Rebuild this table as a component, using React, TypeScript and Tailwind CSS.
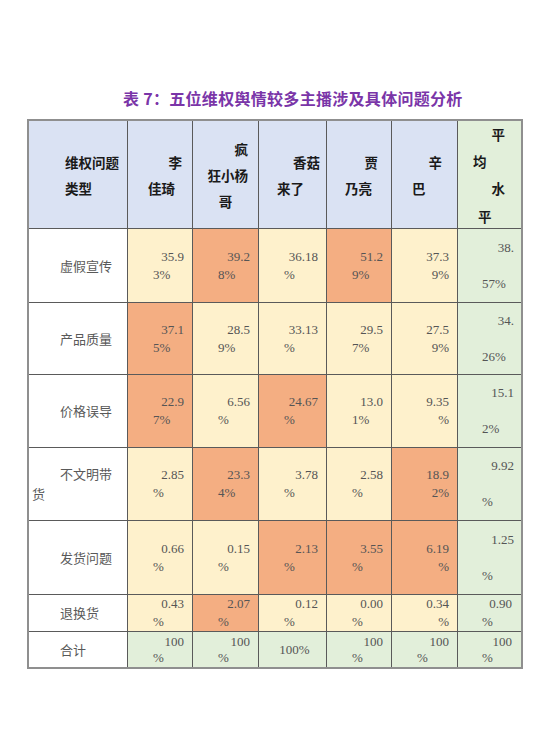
import React from 'react';

type Cell = {
  a: string;
  b?: string;
  kind: 'split' | 'right' | 'single' | 'avg' | 'avgTight';
  bg: 'y' | 'o' | 'g';
};

const bgClass = {
  y: 'bg-[#fef1cc]',
  o: 'bg-[#f4ae82]',
  g: 'bg-[#e2efda]',
};

const rows: { label: React.ReactNode; cells: Cell[]; tight?: boolean }[] = [
  {
    label: '虚假宣传',
    cells: [
      { a: '35.9', b: '3%', kind: 'split', bg: 'y' },
      { a: '39.2', b: '8%', kind: 'split', bg: 'o' },
      { a: '36.18', b: '%', kind: 'split', bg: 'y' },
      { a: '51.2', b: '9%', kind: 'split', bg: 'o' },
      { a: '37.3', b: '9%', kind: 'right', bg: 'y' },
      { a: '38.', b: '57%', kind: 'avg', bg: 'g' },
    ],
  },
  {
    label: '产品质量',
    cells: [
      { a: '37.1', b: '5%', kind: 'split', bg: 'o' },
      { a: '28.5', b: '9%', kind: 'split', bg: 'y' },
      { a: '33.13', b: '%', kind: 'split', bg: 'y' },
      { a: '29.5', b: '7%', kind: 'split', bg: 'y' },
      { a: '27.5', b: '9%', kind: 'right', bg: 'y' },
      { a: '34.', b: '26%', kind: 'avg', bg: 'g' },
    ],
  },
  {
    label: '价格误导',
    cells: [
      { a: '22.9', b: '7%', kind: 'split', bg: 'o' },
      { a: '6.56', b: '%', kind: 'split', bg: 'y' },
      { a: '24.67', b: '%', kind: 'split', bg: 'o' },
      { a: '13.0', b: '1%', kind: 'split', bg: 'y' },
      { a: '9.35', b: '%', kind: 'right', bg: 'y' },
      { a: '15.1', b: '2%', kind: 'avg', bg: 'g' },
    ],
  },
  {
    label: (
      <>
        不文明带
        <br />货
      </>
    ),
    cells: [
      { a: '2.85', b: '%', kind: 'split', bg: 'y' },
      { a: '23.3', b: '4%', kind: 'split', bg: 'o' },
      { a: '3.78', b: '%', kind: 'split', bg: 'y' },
      { a: '2.58', b: '%', kind: 'split', bg: 'y' },
      { a: '18.9', b: '2%', kind: 'right', bg: 'o' },
      { a: '9.92', b: '%', kind: 'avg', bg: 'g' },
    ],
  },
  {
    label: '发货问题',
    cells: [
      { a: '0.66', b: '%', kind: 'split', bg: 'y' },
      { a: '0.15', b: '%', kind: 'split', bg: 'y' },
      { a: '2.13', b: '%', kind: 'split', bg: 'o' },
      { a: '3.55', b: '%', kind: 'split', bg: 'o' },
      { a: '6.19', b: '%', kind: 'right', bg: 'o' },
      { a: '1.25', b: '%', kind: 'avg', bg: 'g' },
    ],
  },
  {
    label: '退换货',
    cells: [
      { a: '0.43', b: '%', kind: 'split', bg: 'y' },
      { a: '2.07', b: '%', kind: 'split', bg: 'o' },
      { a: '0.12', b: '%', kind: 'split', bg: 'y' },
      { a: '0.00', b: '%', kind: 'split', bg: 'y' },
      { a: '0.34', b: '%', kind: 'right', bg: 'y' },
      { a: '0.90', b: '%', kind: 'avgTight', bg: 'g' },
    ],
  },
  {
    label: '合计',
    tight: true,
    cells: [
      { a: '100', b: '%', kind: 'split', bg: 'g' },
      { a: '100', b: '%', kind: 'split', bg: 'g' },
      { a: '100%', kind: 'single', bg: 'g' },
      { a: '100', b: '%', kind: 'split', bg: 'g' },
      { a: '100', b: '%', kind: 'split', bg: 'g' },
      { a: '100', b: '%', kind: 'avgTight', bg: 'g' },
    ],
  },
];

const serif = "font-['Liberation_Serif','Noto_Sans_CJK_SC',serif]";
const cjk = "font-['Noto_Sans_CJK_SC',sans-serif]";

function NumCell({ c, tight }: { c: Cell; tight?: boolean }) {
  const lead = tight ? 'leading-[16px]' : 'leading-[18px]';
  const base = `${bgClass[c.bg]} ${serif} text-[13px] text-[#555555] flex flex-col justify-center`;
  if (c.kind === 'single') {
    return <div className={`${base} items-center pl-[4px] ${lead}`}>{c.a}</div>;
  }
  if (c.kind === 'avg') {
    return (
      <div className={`${base} leading-[36px]`}>
        <div className="text-right pr-[7px]">{c.a}</div>
        <div className="text-left pl-[24px]">{c.b}</div>
      </div>
    );
  }
  if (c.kind === 'avgTight') {
    return (
      <div className={`${base} ${lead}`}>
        <div className="text-right pr-[9px]">{c.a}</div>
        <div className="text-left pl-[24px]">{c.b}</div>
      </div>
    );
  }
  return (
    <div className={`${base} ${lead}`}>
      <div className="text-right pr-[8px]">{c.a}</div>
      <div className={c.kind === 'right' ? 'text-right pr-[8px]' : 'text-left pl-[25px]'}>{c.b}</div>
    </div>
  );
}

function Head({ lines, green }: { lines: { t: string; cls: string }[]; green?: boolean }) {
  return (
    <div
      className={`${green ? 'bg-[#e2efda]' : 'bg-[#dae2f3]'} ${cjk} font-bold text-[13.5px] text-[#1a1a1a] leading-[26px] flex flex-col justify-center`}
    >
      {lines.map((l, i) => (
        <div key={i} className={l.cls}>
          {l.t}
        </div>
      ))}
    </div>
  );
}

export default function App() {
  return (
    <div className="w-[540px] min-h-[746px] bg-white pt-[88px]">
      <div className={`pl-[123px] ${cjk} font-bold text-[16px] tracking-[0.3px] leading-[20px] text-[#7a35a8]`}>
        表 7：五位维权舆情较多主播涉及具体问题分析
      </div>
      <div className="ml-[27px] mt-[11px] w-[496px] border-2 border-[#8f8f8f]">
        <div className="grid grid-cols-[98px_64px_65px_67px_64px_65px_63px] grid-rows-[107px_73px_71px_72px_72px_73px_36px_35px] gap-px bg-[#5a5a5a]">
          <Head
            lines={[
              { t: '维权问题', cls: 'pl-[36px]' },
              { t: '类型', cls: 'pl-[36px]' },
            ]}
          />
          <Head
            lines={[
              { t: '李', cls: 'text-right pr-[10px]' },
              { t: '佳琦', cls: 'pl-[20px]' },
            ]}
          />
          <Head
            lines={[
              { t: '疯', cls: 'text-right pr-[10px]' },
              { t: '狂小杨', cls: 'text-right pr-[10px]' },
              { t: '哥', cls: 'text-center' },
            ]}
          />
          <Head
            lines={[
              { t: '香菇', cls: 'text-right pr-[6px]' },
              { t: '来了', cls: 'pl-[18px]' },
            ]}
          />
          <Head
            lines={[
              { t: '贾', cls: 'text-right pr-[13px]' },
              { t: '乃亮', cls: 'pl-[18px]' },
            ]}
          />
          <Head
            lines={[
              { t: '辛', cls: 'text-right pr-[15px]' },
              { t: '巴', cls: 'pl-[20px]' },
            ]}
          />
          <Head
            green
            lines={[
              { t: '平', cls: 'text-right pr-[16px] leading-[28px]' },
              { t: '均', cls: 'pl-[15px]' },
              { t: '水', cls: 'text-right pr-[16px] leading-[28px]' },
              { t: '平', cls: 'pl-[20px] leading-[28px]' },
            ]}
          />
          {rows.map((r, ri) => (
            <React.Fragment key={ri}>
              <div
                className={`bg-white ${cjk} text-[13px] text-[#595959] leading-[20px] pl-[3px] indent-[28px] flex items-center`}
              >
                <div>{r.label}</div>
              </div>
              {r.cells.map((c, ci) => (
                <NumCell key={ci} c={c} tight={r.tight} />
              ))}
            </React.Fragment>
          ))}
        </div>
      </div>
    </div>
  );
}
